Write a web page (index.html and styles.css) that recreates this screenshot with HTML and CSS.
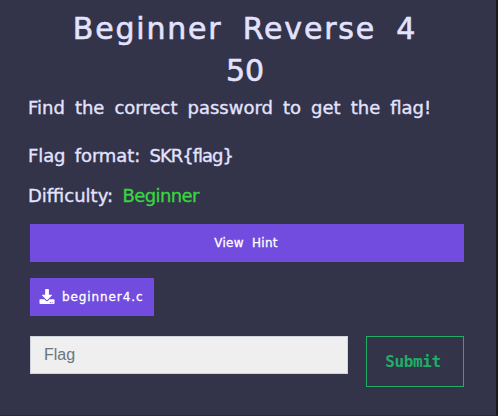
FILE: index.html
```
<!DOCTYPE html>
<html lang="en">
<head>
<meta charset="utf-8">
<title>Beginner Reverse 4</title>
<link rel="stylesheet" href="styles.css">
</head>
<body>
<main class="challenge">
  <h1 class="title">Beginner Reverse 4<br><span class="points">50</span></h1>
  <p class="text intro">Find the correct password to get the flag!</p>
  <p class="text format">Flag format: <span class="pattern">SKR{flag}</span></p>
  <p class="text difficulty">Difficulty: <span class="level">Beginner</span></p>
  <button class="button hint">View Hint</button>
  <a class="button file">
    <svg class="icon" viewBox="0 0 512 512" aria-hidden="true"><path fill="currentColor" d="M216 0h80c13.300 0 24 10.700 24 24v168h87.700c17.800 0 26.700 21.500 14.100 34.100L269.700 378.300c-7.500 7.500-19.800 7.500-27.300 0L90.100 226.100c-12.600-12.600-3.700-34.100 14.100-34.100H192V24c0-13.300 10.700-24 24-24zm296 376v112c0 13.300-10.700 24-24 24H24c-13.300 0-24-10.700-24-24V376c0-13.300 10.700-24 24-24h146.700l49 49c20.100 20.100 52.500 20.100 72.600 0l49-49H488c13.300 0 24 10.700 24 24zm-124 88c0-11-9-20-20-20s-20 9-20 20 9 20 20 20 20-9 20-20zm64 0c0-11-9-20-20-20s-20 9-20 20 9 20 20 20 20-9 20-20z"/></svg>
    <span>beginner4.c</span>
  </a>
  <form class="answer">
    <input class="flag" type="text" placeholder="Flag">
    <button class="submit" type="button">Submit</button>
  </form>
</main>
</body>
</html>
```

FILE: styles.css
```
* { box-sizing: border-box; }
html, body { height: 100%; }
body {
  margin: 0;
  overflow: hidden;
  background: #33334a;
  font-family: "DejaVu Sans", sans-serif;
  color: #e3e3ff;
}
.challenge {
  height: 416px;
  padding: 8px 32px 0 30px;
  border-right: 2px solid #191a1c;
  border-bottom: 1px solid #2b2b3c;
}
.title {
  margin: 0 -10px 0 -14px;
  font-size: 30px;
  line-height: 42px;
  font-weight: 400;
  letter-spacing: 1.8px;
  word-spacing: 9px;
  text-align: center;
  white-space: nowrap;
  -webkit-text-stroke: 0.6px currentColor;
}
.points { letter-spacing: 0; }
.text {
  margin: 0 0 0 -2px;
  font-size: 18px;
  line-height: 24px;
  letter-spacing: -0.1px;
  word-spacing: 3.7px;
  white-space: nowrap;
  -webkit-text-stroke: 0.35px currentColor;
}
.intro { margin-top: 4px; letter-spacing: 0; word-spacing: 4.3px; }
.format { margin-top: 24px; }
.pattern { letter-spacing: -1px; }
.difficulty { margin-top: 16px; letter-spacing: 0; }
.level { color: #37d63e; letter-spacing: -0.6px; }
.button {
  display: flex;
  align-items: center;
  height: 38px;
  border: 0;
  background: #714cdf;
  color: #fff;
  font-family: inherit;
  font-size: 12px;
  -webkit-text-stroke: 0.3px currentColor;
}
.hint {
  width: 100%;
  margin-top: 16px;
  padding-right: 8px;
  justify-content: center;
  letter-spacing: 0.3px;
  word-spacing: 4px;
}
.file {
  width: 124px;
  margin-top: 16px;
  padding-left: 9px;
  gap: 7px;
  letter-spacing: 0.9px;
}
.icon { width: 16px; height: 15px; flex: none; margin-top: -2px; }
.answer {
  display: flex;
  align-items: flex-start;
  justify-content: space-between;
  margin: 20px 0 0;
}
.flag {
  width: 318px;
  height: 38px;
  padding: 0 13px;
  border: 1px solid #ced4da;
  border-radius: 0;
  background: #efefef;
  font: 16px "Liberation Sans", sans-serif;
}
.flag::placeholder { color: #6c757d; opacity: 1; }
.submit {
  width: 98px;
  height: 51px;
  padding: 0 4px 0 0;
  border: 1px solid #1eae66;
  background: transparent;
  color: #1eae66;
  font: 700 16px "DejaVu Sans Mono", monospace;
  letter-spacing: -0.4px;
}
```
